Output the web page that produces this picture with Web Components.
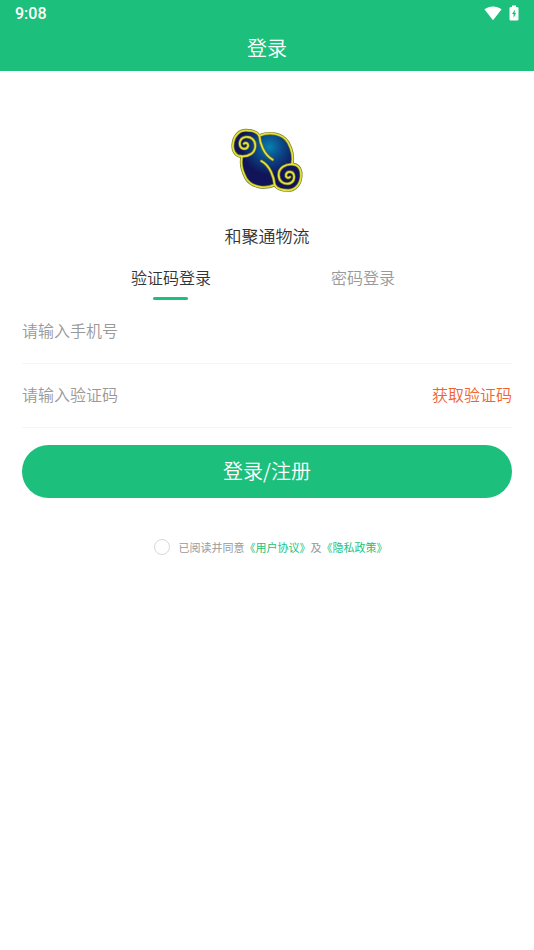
<!DOCTYPE html>
<html lang="zh-CN">
<head>
<meta charset="utf-8">
<meta name="viewport" content="width=device-width, initial-scale=1">
<title>登录</title>
<style>
  body {
    margin: 0;
    background: #fff;
    color: #333;
    font-family: "Noto Sans CJK SC", sans-serif;
    font-weight: 350;
    --main-color: #1dbf7c;
    --muted-color: #999;
    --line-color: #f5f5f5;
    --code-color: #f0652f;
  }
</style>
</head>
<body>
<login-page></login-page>

<script>
class StatusBar extends HTMLElement {
  connectedCallback () {
    const shadowRoot = this.attachShadow({mode: 'open'});
    shadowRoot.innerHTML = `
      <style>
        :host {
          display: flex;
          align-items: center;
          justify-content: space-between;
          height: 27px;
          padding: 0 15px;
          font: 500 16px/27px Roboto, sans-serif;
        }
        .icons {
          display: flex;
          gap: 7px;
          padding-bottom: 2px;
        }
        svg {
          display: block;
          fill: currentColor;
        }
      </style>
      <span><slot></slot></span>
      <div class="icons">
        <svg width="18" height="16" viewBox="0 0 18 16" aria-hidden="true">
          <path d="M9 15.200 L.4 4.300 C5.200 .4 12.800 .4 17.600 4.300 Z"/>
        </svg>
        <svg width="10" height="16" viewBox="0 0 10 16" aria-hidden="true">
          <path fill-rule="evenodd" d="M3 .5h4v1.500h1.200q1.300 0 1.300 1.300v10.900q0 1.300-1.300 1.300H1.800Q.5 15.500.5 14.200V3.300Q.5 2 1.800 2H3ZM6.200 4.200 3 9h1.600v4L7.200 7.800H5.500Z"/>
        </svg>
      </div>
    `;
  }
}

class NavBar extends HTMLElement {
  connectedCallback () {
    const shadowRoot = this.attachShadow({mode: 'open'});
    shadowRoot.innerHTML = `
      <style>
        :host {
          display: block;
          padding-bottom: 2px;
          text-align: center;
        }
        h1 {
          margin: 0;
          font-size: 20px;
          font-weight: inherit;
          line-height: 42px;
        }
      </style>
      <h1><slot></slot></h1>
    `;
  }
}

class BrandLogo extends HTMLElement {
  connectedCallback () {
    const shadowRoot = this.attachShadow({mode: 'open'});
    shadowRoot.innerHTML = `
      <style>
        :host {
          display: flex;
          flex-direction: column;
          align-items: center;
          gap: 24px;
        }
        svg {
          display: block;
        }
        h2 {
          margin: 0;
          font-size: 17px;
          font-weight: inherit;
          line-height: 24px;
        }
      </style>
      <svg width="90" height="80" viewBox="-18 -15 270 240" aria-hidden="true">
        <defs>
          <radialGradient id="glow" gradientUnits="userSpaceOnUse" cx="124" cy="66" r="84">
            <stop offset="0" stop-color="#0880b0"/>
            <stop offset=".45" stop-color="#0b4988"/>
            <stop offset="1" stop-color="#111459"/>
          </radialGradient>
          <g id="half">
            <path d="M38 94 C20 92 13 74 15 58 C17 32 34 16 54 16 C74 16 88 22 94 32"/>
            <path d="M94 32 C96 56 108 90 134 104"/>
            <path d="M94 32 C125 19 163 25 180 52 C192 74 197 98 192 118"/>
            <path d="M38 94 C62 96 82 84 82 62 C82 44 68 34 53 36 C38 38 32 52 37 64 C42 74 56 74 60 64 C62 56 54 50 48 56"/>
          </g>
        </defs>
        <g fill="url(#glow)">
          <path d="M38 94 C20 92 13 74 15 58 C17 32 34 16 54 16 C74 16 88 22 94 32 C125 19 163 25 180 52 C192 74 197 98 196 118 L117 112 Z"/>
          <path d="M196 118 C214 120 221 138 219 154 C217 180 200 196 180 196 C160 196 146 190 140 180 C109 193 71 187 54 160 C42 138 37 114 38 94 L117 100 Z"/>
        </g>
        <g fill="none" stroke="#77782a" stroke-width="9" stroke-linecap="round" stroke-linejoin="round">
          <use href="#half"/>
          <use href="#half" transform="rotate(180 117 106)"/>
        </g>
        <g fill="none" stroke="#e3e43a" stroke-width="5" stroke-linecap="round" stroke-linejoin="round">
          <use href="#half"/>
          <use href="#half" transform="rotate(180 117 106)"/>
        </g>
      </svg>
      <h2><slot></slot></h2>
    `;
  }
}

class LoginTabs extends HTMLElement {
  connectedCallback () {
    const shadowRoot = this.attachShadow({mode: 'open'});
    shadowRoot.innerHTML = `
      <style>
        :host {
          display: block;
        }
        .tabs {
          display: grid;
          grid-template-columns: 1fr 1fr;
          width: 72%;
          margin: 0 auto;
        }
        button {
          display: flex;
          flex-direction: column;
          align-items: center;
          gap: 9px;
          padding: 0;
          border: 0;
          background: none;
          color: var(--muted-color);
          font: inherit;
          font-size: 16px;
          line-height: 22px;
          cursor: pointer;
        }
        button::after {
          content: "";
          width: 35px;
          height: 3px;
          border-radius: 2px;
        }
        button[aria-selected="true"] {
          color: #333;
        }
        button[aria-selected="true"]::after {
          background: var(--main-color);
        }
      </style>
      <div class="tabs" role="tablist">
        <button type="button" role="tab" aria-selected="true">验证码登录</button>
        <button type="button" role="tab" aria-selected="false">密码登录</button>
      </div>
    `;
    const tabs = shadowRoot.querySelectorAll('button');
    tabs.forEach(tab => tab.addEventListener('click', () => {
      tabs.forEach(item => item.setAttribute('aria-selected', item === tab));
    }));
  }
}

class FormField extends HTMLElement {
  connectedCallback () {
    const label = this.getAttribute('label');
    const shadowRoot = this.attachShadow({mode: 'open'});
    shadowRoot.innerHTML = `
      <style>
        :host {
          display: flex;
          align-items: center;
          height: 59px;
          padding-bottom: 4px;
          border-bottom: 1px solid var(--line-color);
        }
        input {
          flex: 1;
          min-width: 0;
          height: 40px;
          padding: 0;
          border: 0;
          outline: 0;
          background: none;
          color: #333;
          font: inherit;
          font-size: 16px;
        }
        input::placeholder {
          color: var(--muted-color);
          opacity: 1;
        }
      </style>
      <input type="${this.getAttribute('type')}" aria-label="${label}" placeholder="${label}">
      <slot></slot>
    `;
  }
}

class AgreementRow extends HTMLElement {
  connectedCallback () {
    const shadowRoot = this.attachShadow({mode: 'open'});
    shadowRoot.innerHTML = `
      <style>
        :host {
          display: flex;
          align-items: center;
          justify-content: center;
          gap: 9px;
          padding-left: 7px;
          color: var(--muted-color);
          font-size: 11px;
          font-weight: 400;
          line-height: 16px;
        }
        input {
          appearance: none;
          width: 16px;
          height: 16px;
          margin: 0;
          border: 1px solid #d8d8d8;
          border-radius: 50%;
        }
        input:checked {
          border-color: var(--main-color);
          background: var(--main-color);
        }
        a {
          color: var(--main-color);
          text-decoration: none;
        }
      </style>
      <input type="checkbox" id="agree">
      <label for="agree">已阅读并同意<a href="#terms">《用户协议》</a>及<a href="#privacy">《隐私政策》</a></label>
    `;
  }
}

class LoginPage extends HTMLElement {
  connectedCallback () {
    const shadowRoot = this.attachShadow({mode: 'open'});
    shadowRoot.innerHTML = `
      <style>
        :host {
          display: block;
        }
        header {
          background: var(--main-color);
          color: #fff;
        }
        main {
          padding: 49px 22px 24px;
        }
        login-tabs {
          margin: 18px -22px 0;
        }
        button {
          border: 0;
          font: inherit;
          cursor: pointer;
        }
        .code {
          padding: 0;
          background: none;
          color: var(--code-color);
          font-size: 16px;
          line-height: 24px;
        }
        .submit {
          display: block;
          width: 100%;
          height: 53px;
          margin: 17px 0 41px;
          padding: 0 0 2px;
          border-radius: 27px;
          background: var(--main-color);
          color: #fff;
          font-size: 20px;
        }
      </style>
      <header>
        <status-bar>9:08</status-bar>
        <nav-bar>登录</nav-bar>
      </header>
      <main>
        <brand-logo>和聚通物流</brand-logo>
        <login-tabs></login-tabs>
        <form>
          <form-field type="tel" label="请输入手机号"></form-field>
          <form-field type="text" label="请输入验证码">
            <button class="code" type="button">获取验证码</button>
          </form-field>
          <button class="submit" type="button">登录/注册</button>
          <agreement-row></agreement-row>
        </form>
      </main>
    `;
  }
}

window.customElements.define('status-bar', StatusBar);
window.customElements.define('nav-bar', NavBar);
window.customElements.define('brand-logo', BrandLogo);
window.customElements.define('login-tabs', LoginTabs);
window.customElements.define('form-field', FormField);
window.customElements.define('agreement-row', AgreementRow);
window.customElements.define('login-page', LoginPage);
</script>
</body>
</html>
